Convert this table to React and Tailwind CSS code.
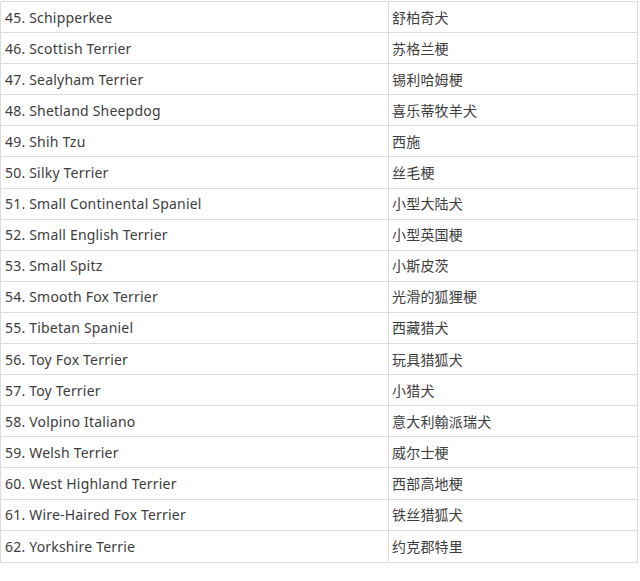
const rows = [
  ['45. Schipperkee', '舒柏奇犬'],
  ['46. Scottish Terrier', '苏格兰梗'],
  ['47. Sealyham Terrier', '锡利哈姆梗'],
  ['48. Shetland Sheepdog', '喜乐蒂牧羊犬'],
  ['49. Shih Tzu', '西施'],
  ['50. Silky Terrier', '丝毛梗'],
  ['51. Small Continental Spaniel', '小型大陆犬'],
  ['52. Small English Terrier', '小型英国梗'],
  ['53. Small Spitz', '小斯皮茨'],
  ['54. Smooth Fox Terrier', '光滑的狐狸梗'],
  ['55. Tibetan Spaniel', '西藏猎犬'],
  ['56. Toy Fox Terrier', '玩具猎狐犬'],
  ['57. Toy Terrier', '小猎犬'],
  ['58. Volpino Italiano', '意大利翰派瑞犬'],
  ['59. Welsh Terrier', '威尔士梗'],
  ['60. West Highland Terrier', '西部高地梗'],
  ['61. Wire-Haired Fox Terrier', '铁丝猎狐犬'],
  ['62. Yorkshire Terrie', '约克郡特里'],
];

export default function App() {
  return (
    <div className="w-[640px] h-[581px] bg-white pt-px">
      <div
        className="w-[638px] border border-[#dcdcdc] text-[14px] text-[#3d3d3d] tracking-[0.2px]"
        style={{ fontFamily: '"Noto Sans", "Noto Sans CJK SC", sans-serif' }}
      >
        {rows.map(([en, zh], i) => (
          <div
            key={en}
            className={`flex h-[31.1px] items-center ${i < rows.length - 1 ? 'border-b border-[#dcdcdc]' : ''}`}
          >
            <div className="w-[388px] h-full flex items-center pl-1 border-r border-[#dcdcdc]">{en}</div>
            <div className="flex-1 pl-[3px]">{zh}</div>
          </div>
        ))}
      </div>
    </div>
  );
}
